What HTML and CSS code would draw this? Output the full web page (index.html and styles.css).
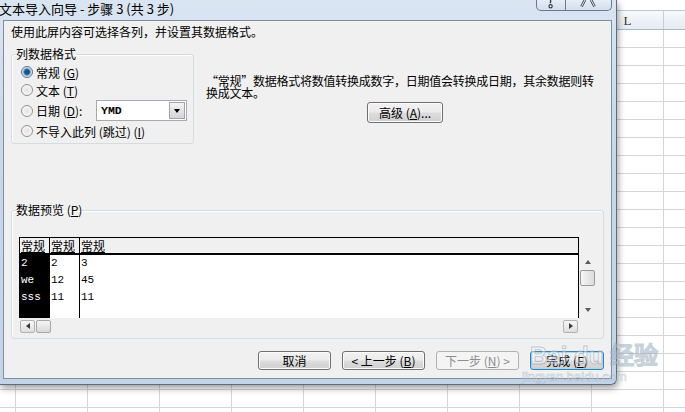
FILE: index.html
```html
<!DOCTYPE html>
<html lang="zh-CN">
<head>
  <meta charset="UTF-8" />
  <title>文本导入向导 - 步骤 3 (共 3 步)</title>
  <link rel="stylesheet" href="styles.css">
</head>
<body>
  <div class="sheet-top"></div>
  <div class="col-head">
    <span>D</span><span>E</span><span>F</span><span>G</span><span>H</span>
    <span>I</span><span>J</span><span>K</span><span>L</span><span class="tail"></span>
  </div>

  <div class="dialog">
    <div class="titlebar">
      <span class="title">文本导入向导 - 步骤 3 (共 3 步)</span>
      <div class="caption">
        <span class="cap-btn help">
          <svg width="28" height="10" viewBox="0 0 28 10"><path d="M13.5 0 q0.5 2 -0.5 3" fill="none" stroke="#2d3a4b" stroke-width="1.4"/><circle cx="13.6" cy="6.3" r="1.6" fill="#f4f7fb" stroke="#2d3a4b" stroke-width="1.2"/></svg>
        </span>
        <span class="cap-btn close">
          <svg width="45" height="10" viewBox="0 0 45 10"><path d="M19 0 L15.5 6.5 M25 0 L28.5 6.5" fill="none" stroke="#2d3a4b" stroke-width="2.6"/><path d="M19 0 L15.5 6.5 M25 0 L28.5 6.5" fill="none" stroke="#f4f7fb" stroke-width="1"/></svg>
        </span>
      </div>
    </div>

    <div class="client">
      <p class="intro">使用此屏内容可选择各列，并设置其数据格式。</p>

      <div class="format-row">
        <fieldset class="group formats">
          <legend>列数据格式</legend>
          <div class="opt"><span class="radio on"></span>常规 (<u>G</u>)</div>
          <div class="opt"><span class="radio"></span>文本 (<u>T</u>)</div>
          <div class="opt date">
            <span class="radio"></span><span class="date-label">日期 (<u>D</u>):</span>
            <span class="combo"><span class="combo-text">YMD</span><span class="combo-btn"></span></span>
          </div>
          <div class="opt"><span class="radio"></span>不导入此列 (跳过) (<u>I</u>)</div>
        </fieldset>

        <div class="note">
          <p>“常规”数据格式将数值转换成数字，日期值会转换成日期，其余数据则转<br>换成文本。</p>
          <button class="btn adv">高级 (<u>A</u>)...</button>
        </div>
      </div>

      <fieldset class="group preview">
        <legend>数据预览 (<u>P</u>)</legend>
        <div class="preview-body">
          <div class="grid-row">
            <div class="grid">
              <div class="col sel">
                <div class="col-title">常规</div>
                <div class="col-body"><div class="cell">2</div><div class="cell">we</div><div class="cell">sss</div></div>
              </div>
              <div class="col">
                <div class="col-title">常规</div>
                <div class="col-body"><div class="cell">2</div><div class="cell">12</div><div class="cell">11</div></div>
              </div>
              <div class="col last">
                <div class="col-title">常规</div>
                <div class="col-body"><div class="cell">3</div><div class="cell">45</div><div class="cell">11</div></div>
              </div>
            </div>
            <div class="vscroll">
              <span class="arrow up"></span>
              <span class="thumb"></span>
              <span class="spacer"></span>
              <span class="arrow down"></span>
            </div>
          </div>
          <div class="hscroll">
            <span class="sbtn left"></span>
            <span class="hthumb"></span>
            <span class="sbtn right"></span>
          </div>
        </div>
      </fieldset>

      <div class="actions">
        <button class="btn cancel">取消</button>
        <button class="btn step">&lt; 上一步 (<u>B</u>)</button>
        <button class="btn step" disabled>下一步 (<u>N</u>) &gt;</button>
        <button class="btn finish">完成 (<u>F</u>)</button>
      </div>
    </div>
  </div>

  <div class="watermark">
    <span class="wm-logo">Bai du 经验</span>
    <span class="wm-url">jingyan.baidu.com</span>
  </div>
</body>
</html>
```

FILE: styles.css
```css
* {
  box-sizing: border-box;
}

body {
  margin: 0;
  width: 685px;
  height: 412px;
  overflow: hidden;
  position: relative;
  font-family: "Noto Sans CJK SC", sans-serif;
  font-size: 12px;
  color: #000;
  background-color: #fff;
  background-image:
    linear-gradient(#d6d6d6 1px, transparent 1px),
    linear-gradient(90deg, #d6d6d6 1px, transparent 1px);
  background-size: 72px 18px;
  background-position: 15px 29px;
}

/* spreadsheet behind the dialog */
.sheet-top {
  height: 11px;
  background: #fff;
  border-bottom: 1px solid #b9c7d7;
}

.col-head {
  display: flex;
  height: 19px;
  padding-left: 15px;
  overflow: hidden;
  background: linear-gradient(#f7f9fc, #e5ebf3);
  border-bottom: 1px solid #a7b8cb;
}

.col-head span {
  flex: none;
  width: 72px;
  border-left: 1px solid #c6d0dc;
  text-align: center;
  line-height: 19px;
  font-family: "Liberation Serif", serif;
  font-size: 13px;
  color: #333;
}

.col-head .tail {
  width: 22px;
}

/* dialog window */
.dialog {
  position: absolute;
  left: 0;
  top: 0;
  width: 617px;
  height: 385px;
  display: flex;
  flex-direction: column;
  padding: 0 4px 5px 0;
  background: linear-gradient(#dae5f2, #cad9ea 30%, #c4d4e7);
  border-right: 1px solid #5d6c7f;
  border-bottom: 1px solid #5d6c7f;
  border-bottom-right-radius: 6px;
  box-shadow: 1px 3px 7px rgba(0, 0, 0, 0.4);
}

.titlebar {
  flex: none;
  height: 20px;
  display: flex;
  justify-content: space-between;
  align-items: flex-start;
}

.title {
  margin-left: -1px;
  font-size: 13px;
  line-height: 18px;
}

.caption {
  display: flex;
  height: 11px;
  border: 1px solid #6a7a8e;
  border-top: none;
  border-radius: 0 0 5px 5px;
  overflow: hidden;
  background: linear-gradient(#e6edf6, #d3dfec);
}

.cap-btn {
  display: block;
  height: 10px;
}

.cap-btn svg {
  display: block;
}

.help {
  width: 29px;
  border-right: 1px solid #6a7a8e;
}

.close {
  width: 45px;
}

.client {
  flex: 1;
  margin-left: 3px;
  display: flex;
  flex-direction: column;
  padding: 4px 7px 0 7px;
  background: #f0f0f0;
  border: 1px solid #7d8da2;
}

.intro {
  margin: 0;
  line-height: 14px;
}

.format-row {
  display: flex;
  align-items: flex-start;
  margin-top: 8px;
}

.group {
  margin: 0;
  min-width: 0;
  padding: 0 0 4px 4px;
  border: 1px solid #d3dce3;
  border-radius: 3px;
  box-shadow: inset 1px 1px 0 #fff;
}

.group legend {
  padding: 0;
  line-height: 14px;
}

.formats {
  flex: none;
  width: 183px;
}

.opt {
  display: flex;
  align-items: center;
  height: 16px;
  margin: 2px 0 0 5px;
  white-space: nowrap;
}

.opt:first-of-type {
  margin-top: 3px;
}

.opt.date {
  height: 21px;
}

.radio {
  flex: none;
  width: 12px;
  height: 12px;
  margin-right: 3px;
  border-radius: 50%;
  border: 1px solid #8f9091;
  background: radial-gradient(circle at 50% 50%, #e2e2e2, #f7f7f7 70%);
}

.radio.on {
  border-color: #5b6f86;
  background: radial-gradient(circle at 50% 50%, #1d4f7e 0 2px, #3f86c2 3px, #a9cbe6 4px, #eef3f8 5px);
}

.date-label {
  width: 60px;
}

.combo {
  display: flex;
  width: 91px;
  height: 21px;
  padding: 1px;
  background: #fff;
  border: 1px solid #a6a9b0;
}

.combo-text {
  flex: 1;
  padding-left: 3px;
  font-family: "Liberation Mono", monospace;
  font-weight: bold;
  font-size: 11.5px;
  line-height: 17px;
}

.combo-btn {
  width: 16px;
  display: flex;
  align-items: center;
  justify-content: center;
  border: 1px solid #9fa3a8;
  background: linear-gradient(#f4f4f4, #e3e3e3 50%, #d5d5d5);
}

.combo-btn::after {
  content: "";
  border-left: 3.5px solid transparent;
  border-right: 3.5px solid transparent;
  border-top: 4px solid #000;
}

.note {
  width: 398px;
  margin: 28px 0 0 12px;
  text-align: center;
}

.note p {
  margin: 0;
  text-align: left;
  line-height: 12px;
  letter-spacing: -0.25px;
  white-space: nowrap;
}

.btn {
  height: 21px;
  padding: 0;
  font-family: "Noto Sans CJK SC", sans-serif;
  font-size: 12px;
  line-height: 17px;
  color: #000;
  border: 1px solid #707070;
  border-radius: 3px;
  background: linear-gradient(#f2f2f2, #ebebeb 48%, #dddddd 52%, #cfcfcf);
  box-shadow: inset 0 0 0 1px #fbfbfb;
}

.btn.adv {
  width: 76px;
  margin-top: 3px;
}

/* preview grid */
.preview {
  margin-top: 59px;
  padding-bottom: 5px;
}

.preview-body {
  margin: 20px 0 0 3px;
}

.grid-row {
  display: flex;
}

.grid {
  display: flex;
  width: 560px;
  height: 81px;
  background: #fff;
  border: 1px solid #000;
  border-bottom: none;
}

.col {
  display: flex;
  flex-direction: column;
  width: 30px;
  border-right: 1px solid #000;
}

.col.last {
  flex: 1;
  border-right: none;
}

.col-title {
  height: 17px;
  padding-left: 1px;
  line-height: 15px;
  text-decoration: underline;
  background: #f0f0f0;
  border-bottom: 2px solid #000;
}

.col-body {
  flex: 1;
}

.sel .col-body {
  background: #000;
  color: #fff;
}

.cell {
  height: 17px;
  padding-left: 1px;
  font-family: "Liberation Mono", monospace;
  font-size: 11px;
  line-height: 17px;
}

.vscroll {
  width: 17px;
  height: 64px;
  margin-top: 17px;
  display: flex;
  flex-direction: column;
  align-items: center;
}

.arrow {
  height: 16px;
  width: 15px;
  display: flex;
  align-items: center;
  justify-content: center;
}

.arrow::after {
  content: "";
  border-left: 3.5px solid transparent;
  border-right: 3.5px solid transparent;
}

.arrow.up::after {
  border-bottom: 4px solid #5a5a5a;
}

.arrow.down::after {
  border-top: 4px solid #5a5a5a;
}

.thumb {
  width: 15px;
  height: 16px;
  border: 1px solid #9a9a9a;
  border-radius: 2px;
  background: linear-gradient(90deg, #f5f5f5, #dcdcdc);
}

.spacer {
  flex: 1;
}

.hscroll {
  display: flex;
  align-items: center;
  width: 560px;
  height: 14px;
  margin-top: 1px;
}

.sbtn {
  width: 15px;
  height: 13px;
  display: flex;
  align-items: center;
  justify-content: center;
  border: 1px solid #b2b2b2;
  border-radius: 2px;
  background: linear-gradient(#f7f7f7, #dedede);
}

.sbtn.left {
  margin-left: 1px;
}

.sbtn.right {
  margin-left: auto;
  margin-right: 1px;
}

.sbtn::after {
  content: "";
  border-top: 3.5px solid transparent;
  border-bottom: 3.5px solid transparent;
}

.sbtn.left::after {
  border-right: 4px solid #3a3a3a;
}

.sbtn.right::after {
  border-left: 4px solid #3a3a3a;
}

.hthumb {
  width: 15px;
  height: 13px;
  margin-left: 1px;
  border: 1px solid #a6a6a6;
  border-radius: 2px;
  background: linear-gradient(#f5f5f5, #d8d8d8);
}

/* bottom buttons */
.actions {
  display: flex;
  justify-content: flex-end;
  gap: 11px;
  margin-top: 12px;
}

.actions .btn {
  height: 19px;
  line-height: 15px;
}

.btn.cancel {
  width: 73px;
}

.btn.step {
  width: 83px;
}

.btn.finish {
  width: 74px;
  border-color: #3c7fb1;
  box-shadow: inset 0 0 0 1px #9fdcf7;
}

.btn:disabled {
  color: #8d8d8d;
  border-color: #adb2b5;
  background: #f4f4f4;
  box-shadow: none;
}

/* faint site watermark */
.watermark {
  position: absolute;
  left: 530px;
  top: 342px;
  display: flex;
  flex-direction: column;
  pointer-events: none;
}

.wm-logo {
  font-family: "Liberation Sans", sans-serif;
  font-weight: bold;
  font-size: 24px;
  line-height: 28px;
  color: rgba(255, 255, 255, 0.4);
  -webkit-text-stroke: 1px rgba(110, 135, 160, 0.4);
  white-space: nowrap;
}

.wm-url {
  font-family: "Liberation Sans", sans-serif;
  font-size: 13px;
  line-height: 14px;
  margin-left: -8px;
  color: rgba(255, 255, 255, 0.5);
  -webkit-text-stroke: 0.6px rgba(110, 135, 160, 0.4);
  white-space: nowrap;
}
```
